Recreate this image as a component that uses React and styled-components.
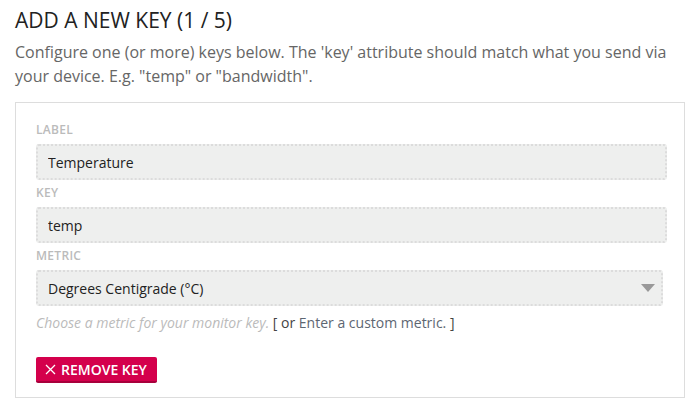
import React from 'react'
import styled, { createGlobalStyle } from 'styled-components'

const Global = createGlobalStyle`
  body {
    margin: 0;
    background: #fff;
    font-family: "Open Sans", "Liberation Sans", sans-serif;
  }
`

const Page = styled.div`
  padding: 6px 15px 0 15px;
  width: 670px;
`

const Title = styled.h2`
  margin: 0;
  font-size: 21px;
  font-weight: 400;
  color: #222;
  line-height: 28px;
`

const Intro = styled.p`
  margin: 6px 0 14px 0;
  font-size: 16px;
  line-height: 24px;
  color: #666;
`

const Panel = styled.div`
  border: 1px solid #ddd;
  padding: 19px 16px 14px 20px;
  display: flex;
  flex-direction: column;
`

const FieldLabel = styled.label`
  display: block;
  font-size: 12px;
  font-weight: 600;
  letter-spacing: 0.3px;
  color: #bbb;
  text-transform: uppercase;
  line-height: 16px;
  margin-bottom: 6px;
`

const Field = styled.div`
  margin-bottom: 5px;
`

const Input = styled.input`
  box-sizing: border-box;
  display: block;
  width: ${p => p.$width || '100%'};
  height: 36px;
  padding: 0 10px;
  background: #eeefee;
  border: 2px dotted #dcdcdc;
  border-radius: 3px;
  font-family: inherit;
  font-size: 14px;
  color: #222;
  outline: none;
`

const SelectBox = styled.div`
  box-sizing: border-box;
  width: 627px;
  height: 36px;
  padding: 0 6px 0 10px;
  background: #eeefee;
  border: 2px dotted #dcdcdc;
  border-radius: 3px;
  font-size: 14px;
  color: #222;
  display: flex;
  align-items: center;
  justify-content: space-between;
`

const Arrow = styled.span`
  width: 0;
  height: 0;
  border-left: 7.5px solid transparent;
  border-right: 7.5px solid transparent;
  border-top: 8px solid #999;
`

const Help = styled.div`
  margin-top: 3px;
  font-size: 14px;
  line-height: 18px;
  color: #444;
`

const HelpMuted = styled.em`
  color: #bbb;
`

const HelpLink = styled.span`
  color: #5d6672;
`

const RemoveButton = styled.button`
  align-self: flex-start;
  margin-top: 25px;
  height: 26px;
  padding: 0 10px 0 9px;
  display: flex;
  align-items: center;
  gap: 5px;
  background: #d4004c;
  border: none;
  border-bottom: 2px solid #a8003c;
  border-radius: 2px;
  color: #fff;
  font-family: inherit;
  font-size: 14px;
  font-weight: 600;
  cursor: pointer;
`

const Cross = () => (
  <svg width="11" height="11" viewBox="0 0 11 11">
    <path d="M1 1 L10 10 M10 1 L1 10" stroke="#fff" strokeWidth="1.3" />
  </svg>
)

export default function App() {
  return (
    <Page>
      <Global />
      <Title>ADD A NEW KEY (1 / 5)</Title>
      <Intro>
        Configure one (or more) keys below. The 'key' attribute should match what you send via
        your device. E.g. "temp" or "bandwidth".
      </Intro>
      <Panel>
        <Field>
          <FieldLabel>Label</FieldLabel>
          <Input defaultValue="Temperature" $width="631px" />
        </Field>
        <Field>
          <FieldLabel>Key</FieldLabel>
          <Input defaultValue="temp" $width="631px" />
        </Field>
        <Field>
          <FieldLabel>Metric</FieldLabel>
          <SelectBox>
            <span>Degrees Centigrade (°C)</span>
            <Arrow />
          </SelectBox>
        </Field>
        <Help>
          <HelpMuted>Choose a metric for your monitor key.</HelpMuted> [ or{' '}
          <HelpLink>Enter a custom metric.</HelpLink> ]
        </Help>
        <RemoveButton>
          <Cross />
          REMOVE KEY
        </RemoveButton>
      </Panel>
    </Page>
  )
}
